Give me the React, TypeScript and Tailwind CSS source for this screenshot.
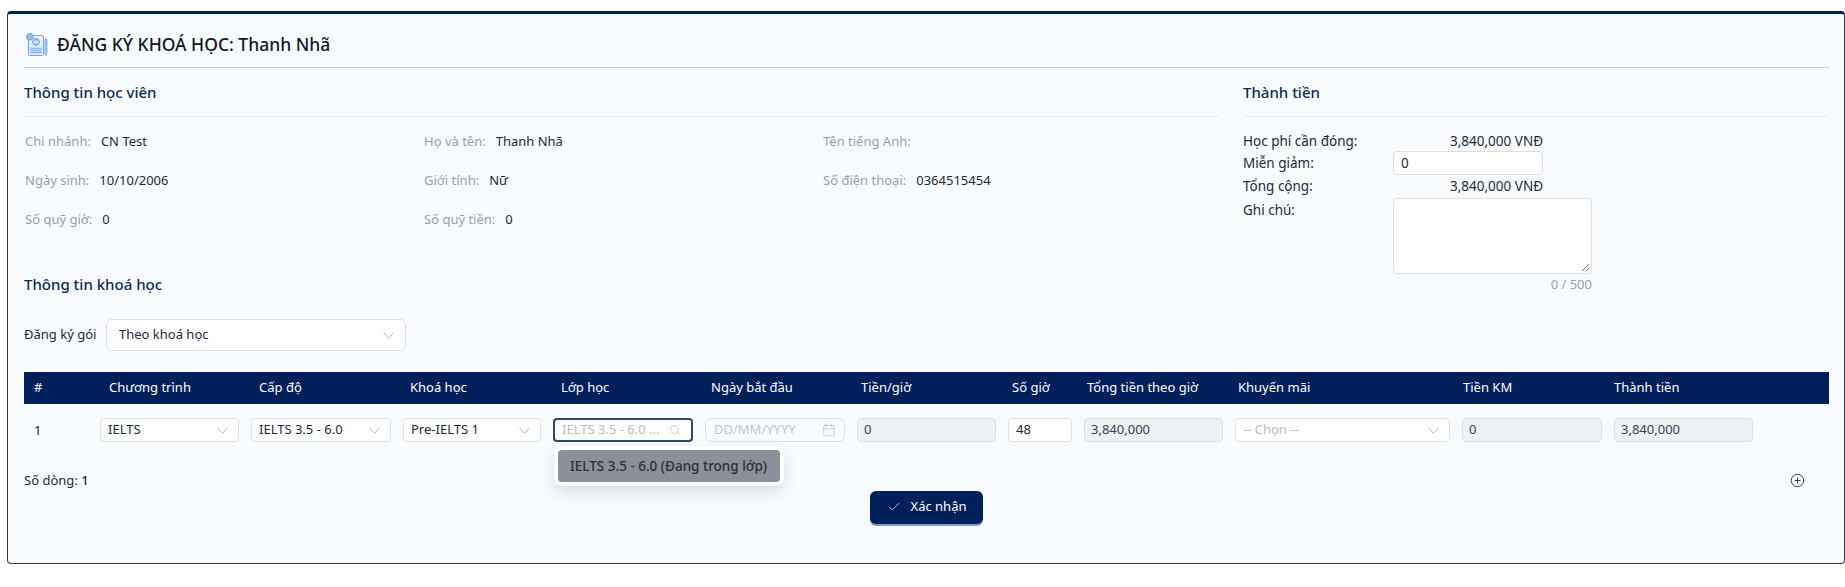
import { Calendar, Check, CirclePlus, Search } from 'lucide-react';

const font = { fontFamily: '"Noto Sans", sans-serif' };

const infoRows = [
  { label: 'Chi nhánh:', value: 'CN Test' },
  { label: 'Họ và tên:', value: 'Thanh Nhã' },
  { label: 'Tên tiếng Anh:', value: '' },
  { label: 'Ngày sinh:', value: '10/10/2006' },
  { label: 'Giới tính:', value: 'Nữ' },
  { label: 'Số điện thoại:', value: '0364515454' },
  { label: 'Số quỹ giờ:', value: '0' },
  { label: 'Số quỹ tiền:', value: '0' },
];

const headers = [
  { label: '#', w: 'w-[75px]' },
  { label: 'Chương trình', w: 'w-[150px]' },
  { label: 'Cấp độ', w: 'w-[151px]' },
  { label: 'Khoá học', w: 'w-[151px]' },
  { label: 'Lớp học', w: 'w-[150px]' },
  { label: 'Ngày bắt đầu', w: 'w-[150px]' },
  { label: 'Tiền/giờ', w: 'w-[151px]' },
  { label: 'Số giờ', w: 'w-[75px]' },
  { label: 'Tổng tiền theo giờ', w: 'w-[151px]' },
  { label: 'Khuyến mãi', w: 'w-[225px]' },
  { label: 'Tiền KM', w: 'w-[151px]' },
  { label: 'Thành tiền', w: 'w-[150px]' },
];

function Logo() {
  return (
    <svg width="22" height="24" viewBox="0 0 22 24" fill="none" className="shrink-0">
      <rect x="2.5" y="2.5" width="15" height="20" rx="1" fill="#e6f0fc" stroke="#6ba6ea" />
      <rect x="4" y="14" width="12" height="7" fill="#c3daf6" />
      <path d="M4.5 15.5h11M4.5 17.5h11M4.5 19.5h11" stroke="#8dbaef" />
      <circle cx="10" cy="9" r="3.4" fill="#a9cbf3" stroke="#5f9fe8" />
      <path d="M7.5 9h5" stroke="#fff" />
      <circle cx="3.8" cy="3.8" r="3.3" fill="#8fc0f2" stroke="#6ba6ea" />
      <path d="M19 6v14l1 2.5 1-2.5V6z" fill="#a9cbf3" stroke="#6ba6ea" strokeWidth="0.8" />
    </svg>
  );
}

// antd style down arrow, wider and flatter than the lucide chevron
function DownArrow() {
  return (
    <svg width="11" height="7" viewBox="0 0 11 7" fill="none" className="shrink-0">
      <path d="M.5 .6 5.5 6.4 10.5 .6" stroke="#b2b5ba" strokeWidth="1" />
    </svg>
  );
}

function InfoItem({ label, value }: { label: string; value: string }) {
  return (
    <div className="flex h-[39px] items-center gap-[10px] pl-px text-[13px]">
      <span className="text-[#9a9fa6]">{label}</span>
      <span className="text-[#1f2937]">{value}</span>
    </div>
  );
}

function SelectBox({ value, placeholder, className }: { value: string; placeholder?: boolean; className: string }) {
  return (
    <div className={`flex h-6 items-center justify-between rounded-[4px] border border-[#dcdfe4] bg-white pl-[7px] pr-[10px] text-[13px] ${className}`}>
      <span className={placeholder ? 'text-[#b9bdc3]' : 'text-[#1f2937]'}>{value}</span>
      <DownArrow />
    </div>
  );
}

function ReadOnly({ value, className }: { value: string; className: string }) {
  return (
    <div className={`flex h-6 items-center rounded-[4px] border border-[#dcdfe4] bg-[#eff2f5] px-[6px] text-[13px] text-[#374151] ${className}`}>
      {value}
    </div>
  );
}

export default function App() {
  return (
    <div className="h-[587px] overflow-hidden bg-white pl-[7px] pt-[11px]" style={font}>
      <div className="h-[553px] w-[1838px] rounded-[4px] border border-t-[3px] border-[#333a44] border-t-[#001f5b] bg-[#f9fcff] pl-4 pr-[15px]">
        <div className="flex h-[54px] items-center gap-[9px] border-b border-[#c6cbd1] pl-[2px] pt-[8px]">
          <Logo />
          <h1 className="text-[17.5px] font-medium text-[#111827]">ĐĂNG KÝ KHOÁ HỌC: Thanh Nhã</h1>
        </div>

        <div className="flex h-[250px] gap-6">
          <div className="w-[1195px]">
            <h2 className="flex h-[49px] items-center border-b border-[#e8ebee] text-[15px] font-medium text-[#0b2a55]">Thông tin học viên</h2>
            <div className="grid grid-cols-[399px_399px_1fr] pt-[5px]">
              {infoRows.map((row) => (
                <InfoItem key={row.label} label={row.label} value={row.value} />
              ))}
            </div>
            <h2 className="mt-[34px] text-[15px] font-medium text-[#0b2a55]">Thông tin khoá học</h2>
          </div>

          <div className="w-[586px]">
            <h2 className="flex h-[49px] items-center border-b border-[#e8ebee] text-[15px] font-medium text-[#0b2a55]">Thành tiền</h2>
            <div className="grid grid-cols-[150px_150px] items-center pt-[11px] text-[13.5px] text-[#1f2937]">
              <span className="h-[23px] pt-[2px] leading-[23px]">Học phí cần đóng:</span>
              <span className="h-[23px] pt-[2px] text-right leading-[23px]">3,840,000 VNĐ</span>
              <span className="h-[23px] leading-[23px]">Miễn giảm:</span>
              <div className="flex h-6 items-center rounded-[4px] border border-[#dcdfe4] bg-white px-[7px]">0</div>
              <span className="h-[23px] leading-[23px]">Tổng cộng:</span>
              <span className="h-[23px] text-right leading-[23px]">3,840,000 VNĐ</span>
            </div>
            <div className="flex text-[13.5px] text-[#1f2937]">
              <span className="w-[150px] leading-[24px]">Ghi chú:</span>
              <div className="w-[199px]">
                <div className="relative h-[76px] rounded-[4px] border border-[#dcdfe4] bg-white">
                  <svg width="9" height="9" viewBox="0 0 9 9" className="absolute bottom-px right-px">
                    <path d="M1 8 8 1M5 8 8 5" stroke="#555" strokeWidth="0.8" />
                  </svg>
                </div>
                <p className="pt-px text-right text-[13px] text-[#9a9fa6]">0 / 500</p>
              </div>
            </div>
          </div>
        </div>

        <div className="mt-[1px] flex items-center text-[13px] text-[#1f2937]">
          <span className="w-[82px]">Đăng ký gói</span>
          <div className="flex h-8 w-[300px] items-center justify-between rounded-[6px] border border-[#dcdfe4] bg-white pl-3 pr-[11px]">
            <span>Theo khoá học</span>
            <DownArrow />
          </div>
        </div>

        <div className="mt-[21px] flex h-8 items-center bg-[#001f5b] pl-[10px] text-[13px] text-white">
          {headers.map((h) => (
            <span key={h.label} className={h.w}>{h.label}</span>
          ))}
        </div>

        <div className="relative mt-[14px] flex gap-3 text-[13px] text-[#1f2937]">
          <span className="w-[64px] pl-[10px] leading-[24px]">1</span>
          <SelectBox value="IELTS" className="w-[139px]" />
          <SelectBox value="IELTS 3.5 - 6.0" className="w-[140px]" />
          <SelectBox value="Pre-IELTS 1" className="w-[138px]" />
          <div className="flex h-6 w-[140px] items-center justify-between rounded-[4px] border-2 border-[#33466e] bg-white pl-[7px] pr-[10px] text-[#b9bdc3]">
            <span>IELTS 3.5 - 6.0 ...</span>
            <Search size={12} strokeWidth={1.2} className="text-[#a8acb2]" />
          </div>
          <div className="flex h-6 w-[140px] items-center justify-between rounded-[6px] border border-[#dcdfe4] pl-[8px] pr-[8px] text-[#c4c7cc]">
            <span>DD/MM/YYYY</span>
            <Calendar size={14} strokeWidth={1} className="text-[#a8acb2]" />
          </div>
          <ReadOnly value="0" className="w-[139px]" />
          <div className="flex h-6 w-[64px] items-center rounded-[4px] border border-[#dcdfe4] bg-white px-[7px]">48</div>
          <ReadOnly value="3,840,000" className="w-[139px]" />
          <SelectBox value="-- Chọn --" placeholder className="w-[215px]" />
          <ReadOnly value="0" className="w-[140px]" />
          <ReadOnly value="3,840,000" className="w-[139px]" />

          <div className="absolute left-[530px] top-[28px] rounded-[8px] bg-white p-1 shadow-[0_6px_16px_rgba(0,0,0,0.12)]">
            <div className="flex h-8 w-[222px] items-center rounded-[4px] bg-[#8b9099] px-3 text-[13.5px] font-medium text-[#2b2f36]">
              IELTS 3.5 - 6.0 (Đang trong lớp)
            </div>
          </div>
        </div>

        <div className="mt-[29px] flex items-center justify-between pr-6 text-[13px] text-[#1f2937]">
          <span>Số dòng: <span className="font-medium">1</span></span>
          <CirclePlus size={15} strokeWidth={1.5} className="text-[#1f3a70]" />
        </div>

        <div className="flex justify-center">
          <button className="flex h-[33px] w-[113px] items-center justify-center gap-[10px] rounded-[6px] bg-[#001f5b] text-[13px] text-white shadow-[0_2px_0_rgba(0,31,91,0.45)]">
            <Check size={14} strokeWidth={1.2} />
            Xác nhận
          </button>
        </div>
      </div>
    </div>
  );
}
